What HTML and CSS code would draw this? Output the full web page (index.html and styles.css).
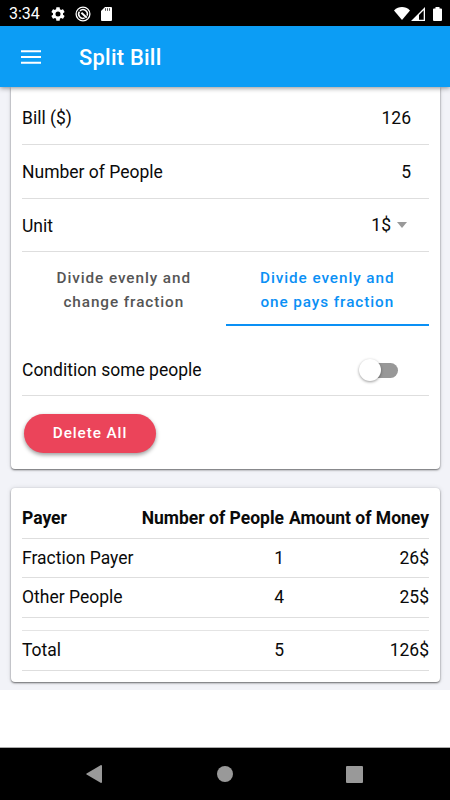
FILE: index.html
```html
<!DOCTYPE html>
<html lang="en">
<head>
<meta charset="utf-8">
<title>Split Bill</title>
<link rel="stylesheet" href="styles.css">
</head>
<body>
<div class="status">
  <span class="clock">3:34</span>
  <svg class="gear" viewBox="2 2 20 20" width="14" height="14"><path fill="#fff" d="M19.14 12.94c.04-.3.06-.61.06-.94s-.02-.64-.07-.94l2.03-1.58c.18-.14.23-.41.12-.61l-1.92-3.32c-.12-.22-.37-.29-.59-.22l-2.39.96c-.5-.38-1.03-.7-1.62-.94l-.36-2.54c-.04-.24-.24-.41-.48-.41h-3.84c-.24 0-.43.17-.47.41l-.36 2.54c-.59.24-1.13.57-1.62.94l-2.39-.96c-.22-.08-.47 0-.59.22L2.74 8.87c-.12.21-.08.47.12.61l2.03 1.58c-.05.3-.09.63-.09.94s.02.64.07.94l-2.03 1.58c-.18.14-.23.41-.12.61l1.92 3.32c.12.22.37.29.59.22l2.39-.96c.5.38 1.03.7 1.62.94l.36 2.54c.05.24.24.41.48.41h3.84c.24 0 .44-.17.47-.41l.36-2.54c.59-.24 1.13-.56 1.62-.94l2.39.96c.22.08.47 0 .59-.22l1.92-3.32c.12-.22.07-.47-.12-.61zM12 15.6A3.6 3.6 0 1 1 12 8.4a3.6 3.6 0 0 1 0 7.2z"/></svg>
  <svg class="ring" viewBox="0 0 16 16" width="16" height="16" fill="none" stroke="#fff"><circle cx="8" cy="8" r="6.9" stroke-width="1.3"/><path stroke-width="1.5" d="M9.6 12A4.3 4.3 0 0 1 4.4 5.6M5 4.9A4.3 4.3 0 0 1 12 9.6"/><path stroke-width="1.9" d="M6.4 6.8l5.4 5"/></svg>
  <svg class="sd" viewBox="0 0 11 14" width="11" height="14"><path fill="#fff" d="M4 0h6a1 1 0 0 1 1 1v12a1 1 0 0 1-1 1H1a1 1 0 0 1-1-1V4z"/><path stroke="#555" stroke-width="1" d="M4.5 1.2v2.6M6.5 1.2v2.6M8.5 1.2v2.6"/></svg>
  <div class="signals">
    <svg class="wifi" viewBox="0 0 16 13" width="16" height="13"><path fill="#fff" d="M0 3.4C4.8-1 11.2-1 16 3.4L8 13z"/></svg>
    <svg class="cell" viewBox="0 0 14 14" width="14" height="14"><path fill="#fff" fill-rule="evenodd" d="M14 0v14H0zM12.7 3.2L8 7.9v4.8h4.7z"/></svg>
    <svg class="battery" viewBox="0 0 9 14" width="9" height="14"><path fill="#fff" d="M2.5 0h4v1.4H8q1 0 1 1V13q0 1-1 1H1q-1 0-1-1V2.4q0-1 1-1h1.5z"/></svg>
  </div>
</div>
<header class="bar">
  <svg viewBox="0 0 20 14" width="20" height="14"><path stroke="#fff" stroke-width="2" d="M0 1.2h20M0 7h20M0 12.8h20"/></svg>
  <h1>Split Bill</h1>
</header>
<main class="page">
  <section class="card form">
    <div class="row bill"><span>Bill ($)</span><span class="value">126</span></div>
    <div class="row people"><span>Number of People</span><span class="value">5</span></div>
    <div class="row unit"><span>Unit</span><span class="value select">1$<i class="caret"></i></span></div>
    <div class="tabs">
      <div class="tab">Divide evenly and<br>change fraction</div>
      <div class="tab active">Divide evenly and<br>one pays fraction</div>
    </div>
    <div class="row condition"><span>Condition some people</span><span class="toggle"><i class="knob"></i></span></div>
    <button class="delete">Delete All</button>
  </section>
  <section class="card result">
    <div class="line head"><span>Payer</span><span>Number of People</span><span>Amount of Money</span></div>
    <div class="line"><span>Fraction Payer</span><span class="num">1</span><span class="num">26$</span></div>
    <div class="line tall"><span>Other People</span><span class="num">4</span><span class="num">25$</span></div>
    <div class="gap"></div>
    <div class="line tall"><span>Total</span><span class="num">5</span><span class="num">126$</span></div>
  </section>
</main>
<div class="ad"></div>
<nav class="nav">
  <svg viewBox="0 0 16 18" width="16" height="18"><path fill="#999" d="M15 0q1 0 1 1v16q0 1-1 1L.6 9.6q-.8-.6 0-1.2z"/></svg>
  <i class="home"></i>
  <i class="recent"></i>
</nav>
</body>
</html>
```
FILE: styles.css
```css
* { box-sizing: border-box; }
body {
  margin: 0;
  width: 450px;
  height: 800px;
  display: flex;
  flex-direction: column;
  overflow: hidden;
  background: #fff;
  color: #0a0a0a;
  font: 17.5px/24px Roboto, sans-serif;
}
svg { display: block; flex: none; }
.status {
  flex: none;
  height: 26px;
  display: flex;
  align-items: center;
  padding: 1px 8px 0 9px;
  background: #000;
  color: #fff;
}
.clock { width: 42px; font-size: 16px; }
.ring { margin-left: 10px; }
.sd { margin-left: 10px; }
.signals { margin-left: auto; display: flex; align-items: center; }
.cell { margin-left: 1px; }
.battery { margin-left: 8px; }
.bar {
  flex: none;
  position: relative;
  z-index: 1;
  height: 61px;
  display: flex;
  align-items: center;
  gap: 38px;
  padding-left: 21px;
  background: #0c9df5;
  color: #fff;
  box-shadow: 0 1px 5px rgba(0, 0, 0, .45);
}
.bar h1 { margin: 0; padding-top: 2px; font-size: 21.9px; font-weight: 500; letter-spacing: .25px; }
.page {
  flex: none;
  height: 603px;
  padding: 0 10px 0 11px;
  background: #f2f3f8;
}
.card {
  background: #fff;
  padding: 0 11px;
  box-shadow: 0 1px 2px rgba(0, 0, 0, .55), 0 0 5px rgba(0, 0, 0, .12);
}
.form { height: 382px; border-radius: 0 0 4px 4px; }
.row {
  display: flex;
  align-items: center;
  justify-content: space-between;
  border-bottom: 1px solid #dedede;
}
.bill { height: 58px; padding-top: 4px; }
.people { height: 54px; }
.unit { height: 53px; padding-top: 1px; }
.value { padding-right: 18px; }
.select { display: flex; align-items: center; gap: 6px; padding-bottom: 2px; }
.caret {
  border: 5.5px solid transparent;
  border-top: 6px solid #999;
  border-bottom: 0;
  margin-right: 4px;
}
.tabs { display: grid; grid-template-columns: 1fr 1fr; height: 74px; }
.tab {
  padding-top: 14px;
  text-align: center;
  font-size: 15.3px;
  font-weight: 500;
  letter-spacing: .92px;
  color: #555;
  border-bottom: 2px solid transparent;
}
.active { color: #0a90f5; border-bottom-color: #0a90f5; }
.condition { height: 70px; padding-top: 19px; }
.toggle {
  width: 37px;
  height: 15px;
  margin-right: 31px;
  border-radius: 8px;
  background: #989898;
  display: flex;
  align-items: center;
}
.knob {
  width: 22px;
  height: 22px;
  margin-left: -2px;
  border-radius: 50%;
  background: #fff;
  box-shadow: 0 1px 3px rgba(0, 0, 0, .4);
}
.delete {
  display: block;
  width: 132px;
  height: 39px;
  margin: 18px 0 0 2px;
  padding: 0;
  border: 0;
  border-radius: 20px;
  background: #eb445a;
  color: #fff;
  font: 500 15.3px/39px Roboto, sans-serif;
  letter-spacing: .92px;
  box-shadow: 0 2px 4px rgba(0, 0, 0, .4);
}
.result { height: 194px; margin-top: 19px; padding-top: 11px; border-radius: 4px; }
.line {
  height: 39px;
  display: grid;
  grid-template-columns: 1fr 143px 145px;
  align-items: center;
  border-bottom: 1px solid #dedede;
  white-space: nowrap;
}
.tall { height: 40px; padding-bottom: 1px; }
.line span + span { text-align: right; }
.head { height: 40px; padding-bottom: 1px; font-weight: 700; }
.gap { height: 13px; border-bottom: 1px solid #e4e4e4; }
.ad { flex: none; height: 57px; }
.nav {
  flex: 1;
  display: flex;
  align-items: center;
  padding: 0 0 0 86px;
  border-top: 1px solid #aaa;
  background: #000;
}
.home { width: 16px; height: 16px; margin-left: 115px; border-radius: 50%; background: #999; }
.recent { width: 17px; height: 17px; margin-left: 113px; border-radius: 1px; background: #999; }
```
